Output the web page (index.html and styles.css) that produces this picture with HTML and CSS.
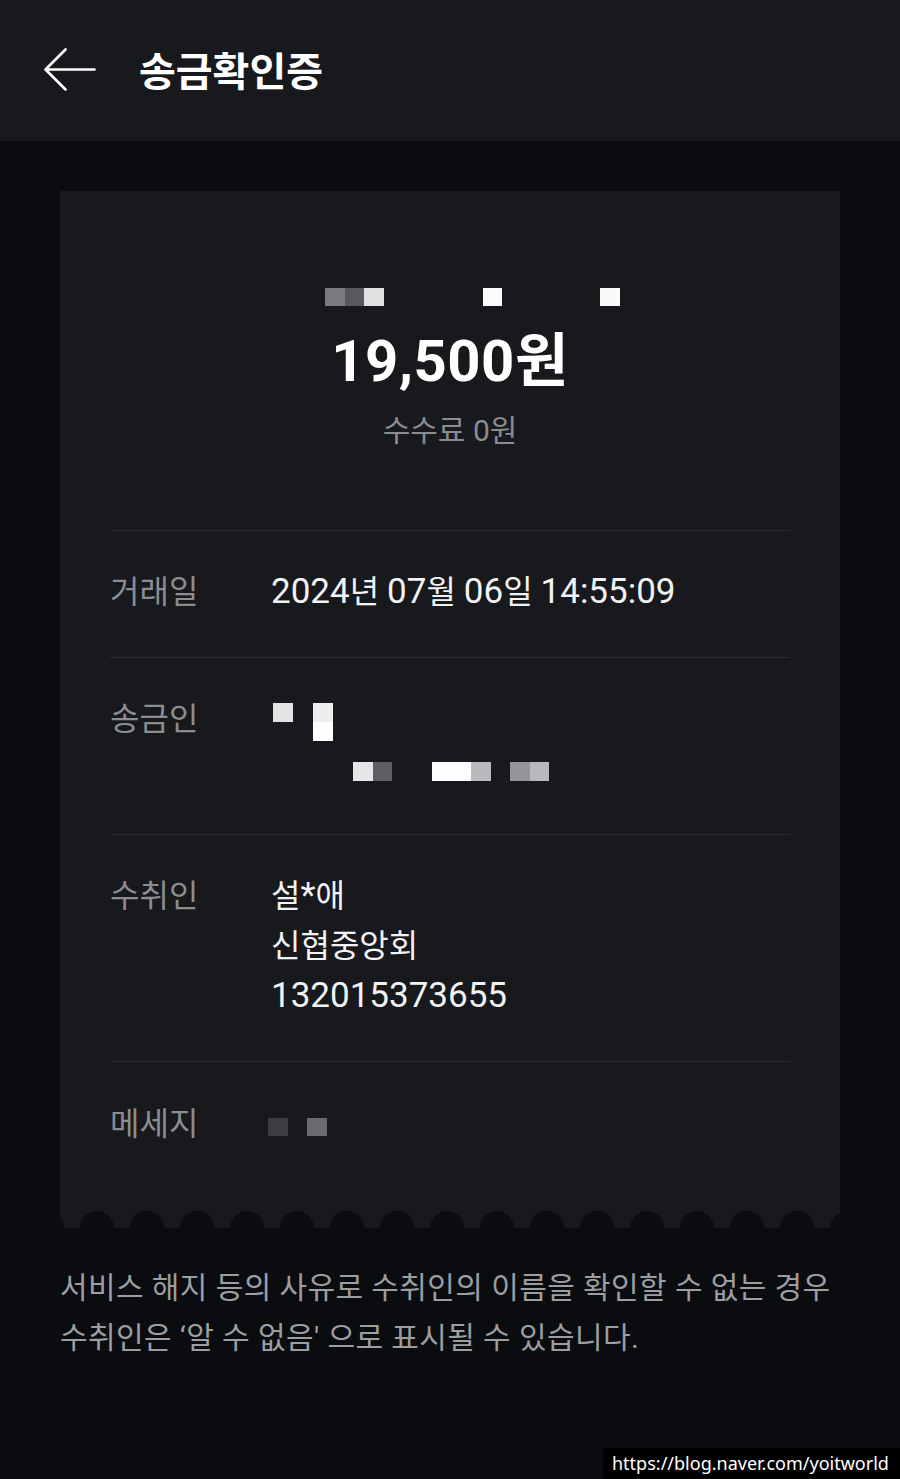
FILE: index.html
```html
<!DOCTYPE html>
<html lang="ko">
<head>
<meta charset="utf-8">
<title>송금확인증</title>
<link rel="stylesheet" href="styles.css">
</head>
<body>
<div class="page">
  <header class="topbar">
    <svg class="back" width="52" height="44" viewBox="0 0 52 44" aria-hidden="true">
      <path d="M1.5 21.5 H50.5 M21.5 1.5 L1.5 21.5 L21.5 41.5" fill="none" stroke="#ffffff" stroke-width="2.6" stroke-linecap="round" stroke-linejoin="round"/>
    </svg>
    <h1 class="title">송금확인증</h1>
  </header>

  <main class="content">
    <section class="receipt">
      <div class="summary">
        <div class="mosaic name-mosaic">
          <span class="px w20 c-7b"></span><span class="px w19 c-58"></span><span class="px w20 c-df"></span>
          <span class="px w99 c-none"></span>
          <span class="px w19 c-fb"></span>
          <span class="px w98 c-none"></span>
          <span class="px w20 c-fa"></span>
        </div>
        <div class="amount">19,500원</div>
        <div class="fee">수수료 0원</div>
      </div>

      <div class="row">
        <div class="label">거래일</div>
        <div class="value"><span class="num">2024</span>년 <span class="num">07</span>월 <span class="num">06</span>일 <span class="num">14:55:09</span></div>
      </div>

      <div class="row">
        <div class="label">송금인</div>
        <div class="value">
          <div class="sender-mosaic">
            <div class="mrow mrow-1">
              <span class="px w20 c-e3 off2"></span>
              <span class="tall off20"><span class="px w20 c-ef"></span><span class="px w20 c-fd"></span></span>
            </div>
            <div class="mrow mrow-2">
              <span class="px w20 c-e6 off82"></span><span class="px w19 c-5d"></span>
              <span class="px w39 c-fd off40"></span><span class="px w20 c-ba"></span>
              <span class="px w20 c-94 off19"></span><span class="px w19 c-b8"></span>
            </div>
          </div>
        </div>
      </div>

      <div class="row">
        <div class="label">수취인</div>
        <div class="value">
          <div>설<span class="num">*</span>애</div>
          <div>신협중앙회</div>
          <div class="num">132015373655</div>
        </div>
      </div>

      <div class="row row-last">
        <div class="label">메세지</div>
        <div class="value">
          <div class="mosaic msg-mosaic">
            <span class="px w20 c-3b"></span>
            <span class="px w19 c-none"></span>
            <span class="px w20 c-6a"></span>
          </div>
        </div>
      </div>

      <div class="scallop"></div>
    </section>

    <p class="notice">서비스 해지 등의 사유로 수취인의 이름을 확인할 수 없는 경우<br>수취인은 ‘알 수 없음' 으로 표시될 수 있습니다.</p>
  </main>

  <div class="watermark">https://blog.naver.com/yoitworld</div>
</div>
</body>
</html>
```

FILE: styles.css
```css
* {
  box-sizing: border-box;
}

html, body {
  margin: 0;
  padding: 0;
}

body {
  background: #0a0c0f;
  font-family: Roboto, "Noto Sans CJK KR", sans-serif;
  color: #f1f2f4;
}

.page {
  position: relative;
  width: 900px;
  height: 1479px;
  overflow: hidden;
  background: #0a0c0f;
}

.topbar {
  height: 141px;
  background: #17191c;
  display: flex;
  align-items: center;
  padding-left: 44px;
  gap: 43px;
}

.back {
  display: block;
  margin-top: -1px;
}

.title {
  margin: 4px 0 0;
  font-size: 40px;
  font-weight: 700;
  color: #ffffff;
  line-height: 1;
}

.content {
  padding: 50px 60px 0;
}

.receipt {
  background: #17191c;
}

.summary {
  padding: 87px 0 79px;
  display: flex;
  flex-direction: column;
  align-items: center;
}

.mosaic {
  display: flex;
  align-items: flex-start;
}

.name-mosaic {
  align-self: flex-start;
  margin-left: 265px;
  height: 36px;
  padding-top: 10px;
}

.px {
  display: block;
  height: 18px;
  flex: none;
}

.w19 { width: 19px; }
.w20 { width: 20px; }
.w39 { width: 39px; }
.w98 { width: 98px; }
.w99 { width: 99px; }

.c-none { background: transparent; }
.c-7b { background: #7b7b7d; }
.c-58 { background: #58595c; }
.c-df { background: #dfe0e2; }
.c-fb { background: #fbfbfb; }
.c-fa { background: #fafafa; }
.c-e3 { background: #e3e3e5; }
.c-ef { background: #eeeeef; }
.c-fd { background: #fcfdff; }
.c-e6 { background: #e6e6e8; }
.c-5d { background: #5d5e62; }
.c-ba { background: #bababc; }
.c-94 { background: #949598; }
.c-b8 { background: #b8b9bc; }
.c-3b { background: #3b3d40; }
.c-6a { background: #6a6b6f; }

.amount {
  margin-top: 12px;
  font-size: 58px;
  font-weight: 700;
  line-height: 70px;
  color: #ffffff;
  letter-spacing: 0.5px;
}

.fee {
  margin-top: 15px;
  font-size: 30px;
  line-height: 40px;
  color: #8a8c90;
}

.row {
  margin: 0 50px;
  border-top: 1px solid #2a2d31;
  padding: 36px 0 40px;
  display: flex;
  align-items: flex-start;
}

.row-last {
  padding-top: 37px;
}

.label {
  width: 161px;
  flex: none;
  font-size: 32px;
  line-height: 50px;
  color: #8b8d91;
}

.value {
  font-size: 32px;
  line-height: 50px;
  color: #f1f2f4;
}

.num {
  font-size: 35px;
}

.sender-mosaic {
  height: 100px;
  padding-top: 9px;
}

.mrow {
  display: flex;
  align-items: flex-start;
}

.mrow-2 {
  margin-top: 21px;
}

.tall {
  display: flex;
  flex-direction: column;
}

.tall .px {
  height: 19px;
}

.mrow .px {
  height: 19px;
}

.off2 { margin-left: 2px; }
.off19 { margin-left: 19px; }
.off20 { margin-left: 20px; }
.off40 { margin-left: 40px; }
.off82 { margin-left: 82px; }

.msg-mosaic {
  height: 50px;
  padding-top: 19px;
  margin-left: -3px;
}

.scallop {
  margin-top: 21px;
  height: 18px;
  background-image: radial-gradient(circle at 25px 18px, #0a0c0f 16.6px, rgba(10, 12, 15, 0) 17.4px);
  background-size: 50px 18px;
  background-position: 12px 0;
  background-repeat: repeat-x;
}

.notice {
  margin: 35px 0 0;
  font-size: 30px;
  line-height: 50px;
  color: #9c9ea2;
  letter-spacing: 0.4px;
}

.watermark {
  position: absolute;
  right: 0;
  bottom: 0;
  width: 297px;
  height: 31px;
  background: #000000;
  color: #ffffff;
  font-family: "Noto Sans", sans-serif;
  font-size: 18px;
  line-height: 31px;
  padding-left: 9px;
  white-space: nowrap;
}
```
